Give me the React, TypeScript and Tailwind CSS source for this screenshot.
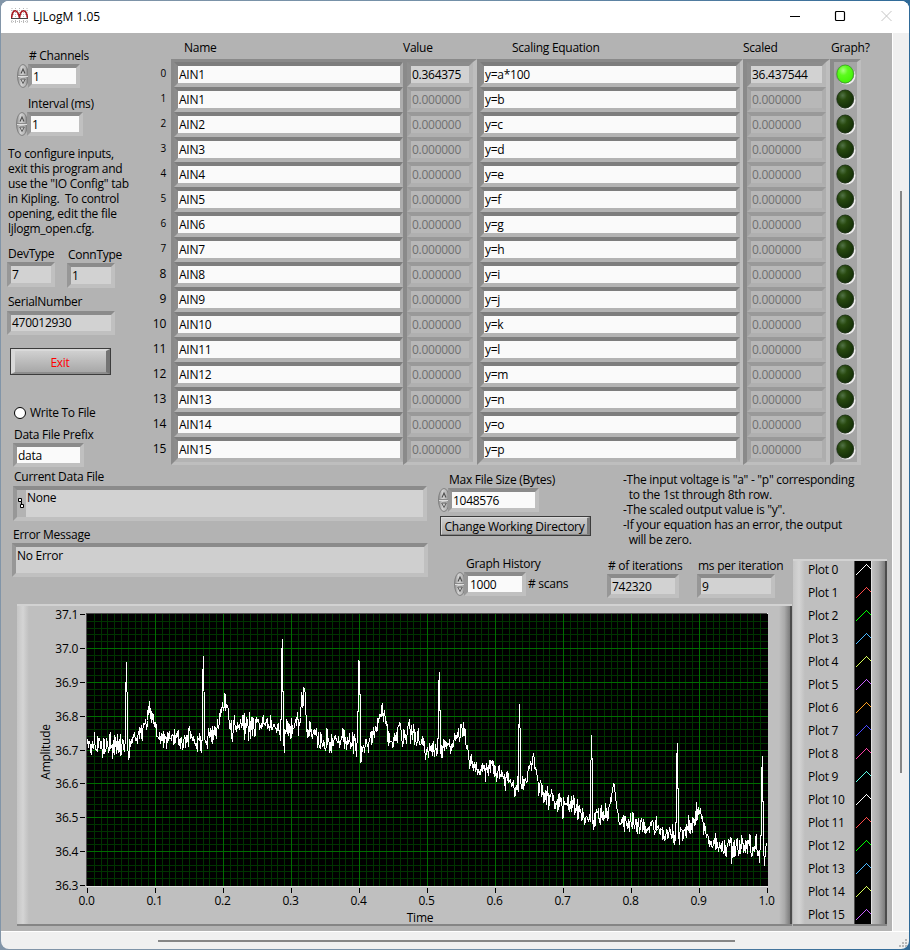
import type { ReactNode } from "react";
import clsx from "clsx";

const equations = ["y=a*100", ..."bcdefghijklmnop".split("").map((c) => `y=${c}`)];

const channels = equations.map((equation, i) => ({
  name: i === 0 ? "AIN1" : `AIN${i}`,
  value: i === 0 ? "0.364375" : "0.000000",
  scaled: i === 0 ? "36.437544" : "0.000000",
  equation,
  active: i === 0,
}));

const plotColors = [
  "#ffffff", "#ff4a4a", "#00ff00", "#4ab8ff", "#d8ff58", "#c860ff", "#ffa020", "#4a4aff",
  "#ff40a8", "#60ffe8", "#ffffff", "#ff4a4a", "#00ff00", "#4ab8ff", "#d8ff58", "#c860ff",
];

// Baseline of the trace, as x/y pairs in plot pixels
const baseline = [
  [87, 744], [100, 746], [115, 744], [124, 748], [129, 745], [131, 740], [135, 736], [140, 731],
  [145, 723], [148, 712], [150, 704], [152, 716], [155, 733], [160, 737], [175, 736], [190, 737],
  [202, 742], [206, 738], [213, 731], [219, 723], [223, 708], [225.5, 697], [228, 713], [231, 726],
  [240, 726], [262, 724], [275, 725], [281, 732], [285, 728], [292, 730], [300, 722], [301.5, 698],
  [303, 700], [304.5, 692], [307, 722], [314, 736], [325, 743], [335, 739], [350, 741], [363, 745],
  [370, 741], [375, 733], [380, 715], [382, 706], [384, 720], [387, 735], [391, 748], [395, 735],
  [405, 731], [412, 732], [420, 740], [425, 747], [450, 747], [457, 739], [460, 729], [463.5, 726],
  [466, 745], [469, 759], [476, 764], [478, 784], [480, 770], [490, 769], [500, 774], [508, 776],
  [514, 784], [526, 782], [530, 764], [534, 757], [537, 777], [542, 793], [550, 798], [565, 804],
  [580, 810], [588, 818], [598, 815], [607, 812], [611, 796], [614.5, 789], [618, 810], [622, 822],
  [635, 824], [650, 829], [665, 832], [676, 835], [685, 832], [692, 826], [697, 815], [700.5, 808],
  [704, 832], [710, 843], [725, 845], [740, 847], [750, 845], [757, 852], [767, 848],
];

// Heartbeat peaks: x, top and the dip that follows
const peaks = [
  [126.3, 662, 759], [203.3, 656, 742], [282.2, 639, 752], [359.3, 660, 762], [439.5, 672, 757],
  [519.7, 704, 788], [591.6, 735, 829], [677.5, 743, 844], [762.2, 756, 865],
];

function baselineAt(x: number) {
  const i = Math.max(1, baseline.findIndex((p) => p[0] >= x));
  const [x0, y0] = baseline[i - 1];
  const [x1, y1] = baseline[i];
  return y0 + ((y1 - y0) * (x - x0)) / (x1 - x0);
}

function buildTrace() {
  let seed = 4217;
  const rand = () => {
    seed = (seed * 16807) % 2147483647;
    return seed / 2147483647;
  };
  const points: string[] = [];
  for (let i = 0; i < 1000; i++) {
    const x = 87 + i * 0.68;
    let y = baselineAt(x) + (rand() + rand() + rand() - 1.5) * 12;
    for (const [px, top, dip] of peaks) {
      const d = x - px;
      if (Math.abs(d) <= 0.35) y = top;
      else if (d > -1.1 && d < 0) y = top + (baselineAt(x) - top) * 0.36;
      else if (d > 0 && d < 1.1) y = top + (baselineAt(x) - top) * 0.4;
      else if (d >= 1.6 && d < 2.3) y = dip;
    }
    points.push(`${x.toFixed(1)},${Math.round(y) + 0.5}`);
  }
  return points.join(" ");
}

const trace = buildTrace();

// One square per pixel: up to the right for eleven pixels, then down for four
const sampleLine = Array.from({ length: 15 }, (_, i) => {
  const y = i < 11 ? 13 - i : i - 7;
  return `M${i + 1} ${y}h1v1h-1z`;
}).join("");

function Label({ children, className }: { children: ReactNode; className?: string }) {
  return <div className={clsx("h-4 whitespace-pre leading-4", className)}>{children}</div>;
}

function Field({ children, className, readOnly }: { children: ReactNode; className?: string; readOnly?: boolean }) {
  return (
    <div
      className={clsx(
        "flex items-center border-4 border-t-[#8b8b8b] border-r-[#c0c0c0] border-b-[#c0c0c0] border-l-[#979797] whitespace-pre",
        readOnly ? "bg-[#d2d2d2]" : "bg-[#fafafa] pt-[2px]",
        className,
      )}
    >
      {children}
    </div>
  );
}

function Spinner() {
  return (
    <svg width="12" height="24" viewBox="0 0 12 24" className="shrink-0">
      <defs>
        <linearGradient id="spin" x1="0" x2="1">
          <stop offset="0" stopColor="#8c8c8c" />
          <stop offset=".35" stopColor="#d2d2d2" />
          <stop offset=".7" stopColor="#b8b8b8" />
          <stop offset="1" stopColor="#6e6e6e" />
        </linearGradient>
      </defs>
      <ellipse cx="6" cy="12" rx="5.5" ry="11.5" fill="url(#spin)" stroke="#7c7c7c" strokeWidth=".9" />
      <path d="M1 11.5h10" stroke="#8a8a8a" />
      <path d="M1 12.5h10" stroke="#dedede" />
      <path d="M4 9.500L6 5L8 9.500" fill="none" stroke="#4c4c4c" strokeWidth="1.100" />
      <path d="M3.7 15H8.3L6 19.5Z" fill="none" stroke="#606060" />
    </svg>
  );
}

function Cell({ children, tone, className }: { children: ReactNode; tone: "edit" | "value" | "disabled"; className?: string }) {
  return (
    <div
      className={clsx(
        "h-[25px] whitespace-pre border-4 leading-[17px]",
        tone === "edit" && "border-t-[#7d7d7d] border-r-[#adadad] border-b-[#b3b3b3] border-l-[#8c8c8c] bg-[#fafafa]",
        tone === "value" && "border-t-[#8c8c8c] border-r-[#b6b6b6] border-b-[#b8b8b8] border-l-[#8f8f8f] bg-[#d2d2d2]",
        tone === "disabled" && "border-t-[#999] border-r-[#adadad] border-b-[#b0b0b0] border-l-[#a2a2a2] bg-[#b8b8b8] text-[#707070]",
        className,
      )}
    >
      {children}
    </div>
  );
}

function Column({ children, className }: { children: ReactNode; className?: string }) {
  return (
    <div
      className={clsx(
        "h-[406px] border-[3px] border-t-[#8a8a8a] border-r-[#bebebe] border-b-[#bebebe] border-l-[#8a8a8a] bg-[#a5a5a5]",
        className,
      )}
    >
      {children}
    </div>
  );
}

function Led({ on }: { on: boolean }) {
  return (
    <svg width="23" height="25" viewBox="0 0 23 25" className="block">
      <circle cx="12.3" cy="13.4" r="9.2" fill="#efefef" />
      <circle cx="10.6" cy="11.6" r="9.8" fill="#a2a2a2" />
      <circle cx="11" cy="12" r="9.2" fill="#8b8b8b" />
      <ellipse cx="11.2" cy="12" rx="8.3" ry="9" fill={on ? "url(#ledOn)" : "url(#ledOff)"} stroke={on ? "#35a81a" : "#142b0b"} strokeWidth=".8" />
    </svg>
  );
}

function ChannelTable() {
  return (
    <div className="flex">
      <div className="mt-[30px] w-[18px] pr-px text-right">
        {channels.map((c, i) => (
          <div key={i} className={clsx("h-[25px]", i < 8 ? "text-[10px] leading-[21px]" : "leading-[22px]")}>
            {i}
          </div>
        ))}
      </div>
      <div className="ml-1">
        <Label className="mt-[7px] mb-[3px] ml-[13px]">Name</Label>
        <Column className="w-[232px] border-r-0">
          {channels.map((c, i) => (
            <Cell key={i} tone="edit" className="border-r-[3px] pl-px">{c.name}</Cell>
          ))}
        </Column>
      </div>
      <div>
        <Label className="mt-[7px] mb-[3px]">Value</Label>
        <Column className="w-[74px] border-r-4 border-l-4">
          {channels.map((c, i) => (
            <Cell key={i} tone={c.active ? "value" : "disabled"} className="pl-px">{c.value}</Cell>
          ))}
        </Column>
      </div>
      <div>
        <Label className="mt-[7px] mb-[3px] ml-[35px]">Scaling Equation</Label>
        <Column className="w-[266px]">
          {channels.map((c, i) => (
            <Cell key={i} tone="edit" className="pl-px">{c.equation}</Cell>
          ))}
        </Column>
      </div>
      <div>
        <Label className="mt-[7px] mb-[3px]">Scaled</Label>
        <Column className="w-[87px] border-r-4 border-l-4">
          {channels.map((c, i) => (
            <Cell key={i} tone={c.active ? "value" : "disabled"} className="pl-px">{c.scaled}</Cell>
          ))}
        </Column>
      </div>
      <div>
        <Label className="mt-[7px] mb-[3px] ml-px w-[31px]">Graph?</Label>
        <Column className="w-[31px] border-r-4 border-l-4">
          <svg width="0" height="0" className="absolute">
            <defs>
              <radialGradient id="ledOn" cx=".38" cy=".3" r=".7">
                <stop offset="0" stopColor="#a8ff80" />
                <stop offset=".4" stopColor="#5cfb1c" />
                <stop offset="1" stopColor="#44f208" />
              </radialGradient>
              <radialGradient id="ledOff" cx=".35" cy=".3" r=".75">
                <stop offset="0" stopColor="#527348" />
                <stop offset=".35" stopColor="#28490f" />
                <stop offset="1" stopColor="#122c06" />
              </radialGradient>
            </defs>
          </svg>
          {channels.map((c, i) => (
            <Led key={i} on={c.active} />
          ))}
        </Column>
      </div>
    </div>
  );
}

function Controls() {
  return (
    <div className="w-[148px] shrink-0">
      <Label className="mt-[15px] ml-7"># Channels</Label>
      <div className="ml-4 flex h-6 items-center">
        <Spinner />
        <Field className="-ml-px h-6 w-[52px] pl-px">1</Field>
      </div>
      <Label className="mt-2 ml-[27px]">Interval (ms)</Label>
      <div className="ml-[15px] flex h-6 items-center">
        <Spinner />
        <Field className="-ml-px h-6 w-[56px] pl-px">1</Field>
      </div>
      <p className="mt-[10px] ml-[7px] whitespace-pre leading-[15px]">
        {`To configure inputs,
exit this program and
use the "IO Config" tab
in Kipling.  To control
opening, edit the file
ljlogm_open.cfg.`}
      </p>
      <div className="mt-[10px] ml-[6px] flex">
        <div className="w-[60px]">
          <Label className="ml-px">DevType</Label>
          <Field readOnly className="h-[25px] w-12 pl-px">7</Field>
        </div>
        <div className="mt-px">
          <Label className="ml-px">ConnType</Label>
          <Field readOnly className="h-[25px] w-12 pl-px">1</Field>
        </div>
      </div>
      <Label className="mt-[6px] ml-[7px]">SerialNumber</Label>
      <Field readOnly className="mt-px ml-[6px] h-6 w-[108px] pl-px">470012930</Field>
      <button className="mt-[13px] ml-[9px] block h-[27px] w-[101px] border border-[#3c3c3c] bg-linear-to-b from-[#d4d4d4] to-[#a4a4a4] text-[12px] leading-[23px]">
        <span className="block h-full border-t-2 border-r-[4px] border-b-2 border-l-[4px] border-t-[#dadada] border-r-[#747474] border-b-[#8d8d8d] border-l-[#d8d8d8] pr-px text-[#ff0000]">Exit</span>
      </button>
      <div className="mt-[30px] ml-[13px] flex h-4 items-center gap-1">
        <span className="mb-px size-3 rounded-full border border-black bg-white" />
        <Label>Write To File</Label>
      </div>
      <Label className="mt-[6px] ml-[13px]">Data File Prefix</Label>
      <Field className="ml-3 h-6 w-[71px] pl-px">data</Field>
    </div>
  );
}

function Files() {
  return (
    <div className="row-span-2 ml-3">
      <Label className="mt-[2px] ml-px">Current Data File</Label>
      <div className="mt-px flex h-[35px] w-[414px] border-4 border-t-[#8b8b8b] border-r-[#c0c0c0] border-b-[#c0c0c0] border-l-[#979797] bg-[#d2d2d2]">
        <svg width="9" height="27" viewBox="0 0 9 27" className="bg-[#b3b3b3]">
          <path d="M1.5 8.5h3v3h-3zM3.5 14.5h3v3h-3zM4.5 11.5v3" fill="#fff" stroke="#000" />
        </svg>
        <Label className="ml-px">None</Label>
      </div>
      <Label className="mt-[6px]">Error Message</Label>
      <div className="-ml-px h-[34px] w-[416px] border-4 border-t-[#8b8b8b] border-r-[#c0c0c0] border-b-[#c0c0c0] border-l-[#979797] bg-[#cfcfcf]">
        <Label className="mt-px ml-px">No Error</Label>
      </div>
    </div>
  );
}

function Chart() {
  const gridX = Array.from({ length: 101 }, (_, i) => Math.round(87 + i * 6.8) + 0.5);
  const gridY = Array.from({ length: 41 }, (_, i) => Math.round(614 + i * 6.775) + 0.5);
  return (
    <svg width="755" height="317" viewBox="29 606 755 317" className="block overflow-visible text-[12px]">
      <rect x="86" y="613" width="682" height="274" fill="#e4e4e4" />
      <rect x="86" y="613" width="681" height="273" fill="#4d4d4d" />
      <rect x="87" y="614" width="681" height="272" fill="#000" />
      <g stroke="#003400" shapeRendering="crispEdges">
        {gridX.map((x, i) => i % 10 !== 0 && <path key={i} d={`M${x} 614V886`} />)}
        {gridY.map((y, i) => i % 5 !== 0 && <path key={i} d={`M87 ${y}H768`} />)}
      </g>
      <g stroke="#006c00" shapeRendering="crispEdges">
        {gridX.map((x, i) => i % 10 === 0 && i > 0 && i < 100 && <path key={i} d={`M${x} 614V886`} />)}
        {gridY.map((y, i) => i % 5 === 0 && i > 0 && i < 40 && <path key={i} d={`M87 ${y}H768`} />)}
      </g>
      <polyline points={trace} fill="none" stroke="#fff" shapeRendering="crispEdges" />
      <g stroke="#000" shapeRendering="crispEdges">
        {Array.from({ length: 11 }, (_, i) => (
          <path key={i} d={`M${87.5 + i * 68} 888v5`} />
        ))}
        {Array.from({ length: 9 }, (_, i) => (
          <path key={i} d={`M80 ${Math.round(614 + i * 33.875) + 0.5}h5`} />
        ))}
      </g>
      {Array.from({ length: 11 }, (_, i) => (
        <text key={i} x={86.5 + i * 68} y="905" textAnchor="middle">{(i / 10).toFixed(1)}</text>
      ))}
      {Array.from({ length: 9 }, (_, i) => (
        <text key={i} x="78" y={619 + i * 33.875} textAnchor="end">{(37.1 - i / 10).toFixed(1)}</text>
      ))}
      <text x="420" y="922" textAnchor="middle">Time</text>
      <text transform="translate(50 752) rotate(-90)" textAnchor="middle">Amplitude</text>
    </svg>
  );
}

function PlotLegend() {
  return (
    <div className="row-span-2 mt-1 flex h-[367px] w-[94px] border-t-2 border-b-2 border-t-[#d2d2d2] border-b-[#858585] bg-[#bfbfbf]">
      <div className="w-3 bg-linear-to-r from-[#c6c6c6] via-[#d4d4d4] to-[#bfbfbf]" />
      <div className="w-[49px] pl-[3px]">
        {plotColors.map((_, i) => (
          <div key={i} className="h-[23px] whitespace-pre leading-[18px]">{`Plot ${i}`}</div>
        ))}
      </div>
      <div className="h-[363px] w-[18px] overflow-hidden border-r border-l border-l-[#4d4d4d] border-r-[#e0e0e0] bg-black">
        {plotColors.map((color, i) => (
          <svg key={i} width="16" height="23" viewBox="0 0 16 23" className="block">
            <path d={sampleLine} fill={color} shapeRendering="crispEdges" />
          </svg>
        ))}
      </div>
      <div className="flex-1 border-r-2 border-[#4c4c4c] bg-linear-to-r from-[#bfbfbf] via-[#aaa] to-[#7c7c7c]" />
    </div>
  );
}

function TitleBar() {
  return (
    <header className="flex h-[30px] items-center bg-white">
      <svg width="17" height="16" viewBox="0 0 17 16" className="ml-[10px]">
        <path d="M1 0v16M4.5 0v16M8.5 0v16M12.5 0v16M16 0v16M0 2.5h17M0 6.5h17M0 13.5h17" stroke="#b9b9b9" strokeDasharray="1 1" />
        <path d="M0 10.5h17" stroke="#444" />
        <path d="M.5 10C1 5.500 2.500 2.700 4.300 2.700S8 6 8.500 10C9 5.500 10.500 2.700 12.500 2.700S16 6 16.500 10" fill="none" stroke="#a8181f" strokeWidth="1.6" />
      </svg>
      <span className="mt-[2px] ml-[5px] text-[12px] tracking-normal">LJLogM 1.05</span>
      <svg width="103" height="12" viewBox="0 0 103 12" className="mr-[16px] ml-auto">
        <path d="M0 6.500h10" stroke="#000" />
        <rect x="45.500" y="1.500" width="9" height="9" rx="1" fill="none" stroke="#000" strokeWidth="1.2" />
        <path d="M91.500 1L101.500 11M101.500 1L91.500 11" stroke="#c4c4c4" />
      </svg>
    </header>
  );
}

export default function App() {
  return (
    <div className="h-[950px] w-[910px] bg-linear-to-r from-[#8295a8] via-[#7390a8] to-[#2f6a98] p-px font-['Open_Sans',sans-serif] text-[12px] tracking-[-0.27px] text-black">
      <div className="flex h-[948px] flex-col overflow-hidden rounded-lg bg-[#f0f0f0]">
        <div className="bg-white pb-[2px]">
          <TitleBar />
        </div>
        <div className="flex h-[898px]">
          <main className="w-[891px] shrink-0 bg-[#b3b3b3]">
            <div className="flex h-[434px]">
              <Controls />
              <ChannelTable />
            </div>
            <div className="grid grid-cols-[437px_355px_95px] grid-rows-[88px_49px_322px]">
              <Files />
              <div className="col-span-2 flex">
                <div className="w-[185px]">
                  <Label className="mt-[5px] ml-[11px]">Max File Size (Bytes)</Label>
                  <div className="flex h-6">
                    <Spinner />
                    <Field className="-ml-[2px] h-6 w-[91px] pl-px">1048576</Field>
                  </div>
                  <button className="mt-1 ml-[2px] block h-5 w-[151px] border border-[#3c3c3c] bg-linear-to-b from-[#d0d0d0] to-[#a8a8a8] leading-[18px] whitespace-pre">
                    <span className="block h-full border border-r-[3px] border-t-[#dadada] border-r-[#7a7a7a] border-b-[#858585] border-l-[#d8d8d8]">Change Working Directory</span>
                  </button>
                </div>
                <p className="mt-[5px] whitespace-pre leading-[15px]">
                  {`-The input voltage is "a" - "p" corresponding
  to the 1st through 8th row.
-The scaled output value is "y".
-If your equation has an error, the output
  will be zero.`}
                </p>
              </div>
              <div className="flex">
                <div className="ml-4 w-[154px]">
                  <Label className="mt-px ml-3">Graph History</Label>
                  <div className="flex h-6">
                    <Spinner />
                    <Field className="-ml-[2px] h-6 w-[62px] pl-[2px]">1000</Field>
                    <Label className="mt-1 ml-[2px]"># scans</Label>
                  </div>
                </div>
                <div className="w-[90px]">
                  <Label className="mt-[3px]"># of iterations</Label>
                  <Field readOnly className="-ml-px h-6 w-[72px] pt-[2px] pl-px">742320</Field>
                </div>
                <div>
                  <Label className="mt-[3px]">ms per iteration</Label>
                  <Field readOnly className="-ml-px h-6 w-[78px] pt-[2px] pl-px">9</Field>
                </div>
              </div>
              <PlotLegend />
              <div className="col-span-2 ml-4 flex h-[322px] w-[775px] border-t-2 border-b-2 border-t-[#d2d2d2] border-b-[#858585] bg-[#bfbfbf]">
                <div className="w-3 bg-linear-to-r from-[#c6c6c6] via-[#d4d4d4] to-[#bfbfbf]" />
                <div className="w-[750px]">
                  <Chart />
                </div>
                <div className="flex-1 border-r-2 border-[#4c4c4c] bg-linear-to-r from-[#bfbfbf] via-[#aaa] to-[#7c7c7c]" />
              </div>
            </div>
          </main>
          <aside className="w-[17px] border-l border-white pt-[158px] pl-[7px]">
            <div className="h-[582px] w-[2px] bg-[#868686]" />
          </aside>
        </div>
        <footer className="flex flex-1 justify-between border-t border-white">
          <div className="mt-2 ml-[157px] h-[2px] w-[577px] bg-[#868686]" />
          <svg width="10" height="10" viewBox="0 0 10 10" className="mt-[7px]">
            <path d="M6 0h2v2h-2zM3 3h2v2h-2zM6 3h2v2h-2zM0 6h2v2h-2zM3 6h2v2h-2zM6 6h2v2h-2z" fill="#b8b8b8" />
          </svg>
        </footer>
      </div>
    </div>
  );
}
